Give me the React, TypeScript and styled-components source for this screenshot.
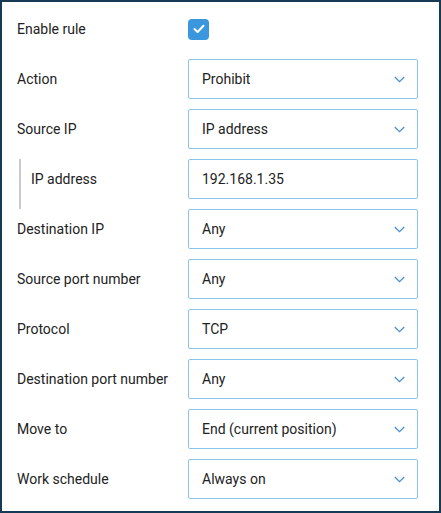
import React from "react";
import styled, { createGlobalStyle } from "styled-components";

const Global = createGlobalStyle`
  html, body { margin: 0; padding: 0; background: #fff; }
  body { font-family: Roboto, "Noto Sans", Arial, sans-serif; }
  * { box-sizing: border-box; }
`;

const Frame = styled.div`
  width: 441px;
  height: 513px;
  border: 2px solid #163a54;
  padding: 7px 21px 2px 15px;
  background: #fff;
`;

const Row = styled.div`
  display: grid;
  grid-template-columns: 171px 1fr;
  align-items: start;
  height: 50px;
`;

const Label = styled.div<{ $indent?: boolean }>`
  height: ${(p) => (p.$indent ? "50px" : "40px")};
  display: flex;
  align-items: ${(p) => (p.$indent ? "flex-start" : "center")};
  padding-top: ${(p) => (p.$indent ? "11px" : "0")};
  font-size: 14px;
  color: #222;
  padding-left: ${(p) => (p.$indent ? "10px" : "0")};
  margin-left: ${(p) => (p.$indent ? "2px" : "0")};
  border-left: ${(p) => (p.$indent ? "2px solid #c9c9ce" : "none")};
  line-height: 18px;
`;

const Field = styled.div`
  height: 40px;
  border: 1px solid #8cc3ea;
  border-radius: 2px;
  display: flex;
  align-items: center;
  justify-content: space-between;
  padding: 0 12px 0 13px;
  font-size: 14px;
  color: #222;
  background: #fff;
`;

const CheckCell = styled.div`
  height: 40px;
  display: flex;
  align-items: center;
`;

const CheckBox = styled.div`
  width: 21px;
  height: 21px;
  border-radius: 4px;
  background: #3a96dd;
  display: flex;
  align-items: center;
  justify-content: center;
`;

const Chevron = () => (
  <svg width="11" height="7" viewBox="0 0 11 7" fill="none">
    <path d="M0.8 1 L5.5 5.6 L10.2 1" stroke="#4a90d0" strokeWidth="1.3" />
  </svg>
);

const selects: [string, string][] = [
  ["Destination IP", "Any"],
  ["Source port number", "Any"],
  ["Protocol", "TCP"],
  ["Destination port number", "Any"],
  ["Move to", "End (current position)"],
  ["Work schedule", "Always on"],
];

export default function App() {
  return (
    <>
      <Global />
      <Frame>
        <Row>
          <Label>Enable rule</Label>
          <CheckCell>
            <CheckBox>
              <svg width="12" height="10" viewBox="0 0 12 10" fill="none">
                <path d="M1.5 5 L4.6 8 L10.5 1.8" stroke="#fff" strokeWidth="2" strokeLinecap="round" strokeLinejoin="round" />
              </svg>
            </CheckBox>
          </CheckCell>
        </Row>
        <Row>
          <Label>Action</Label>
          <Field>
            Prohibit
            <Chevron />
          </Field>
        </Row>
        <Row>
          <Label>Source IP</Label>
          <Field>
            IP address
            <Chevron />
          </Field>
        </Row>
        <Row>
          <Label $indent>IP address</Label>
          <Field>192.168.1.35</Field>
        </Row>
        {selects.map(([l, v]) => (
          <Row key={l}>
            <Label>{l}</Label>
            <Field>
              {v}
              <Chevron />
            </Field>
          </Row>
        ))}
      </Frame>
    </>
  );
}
